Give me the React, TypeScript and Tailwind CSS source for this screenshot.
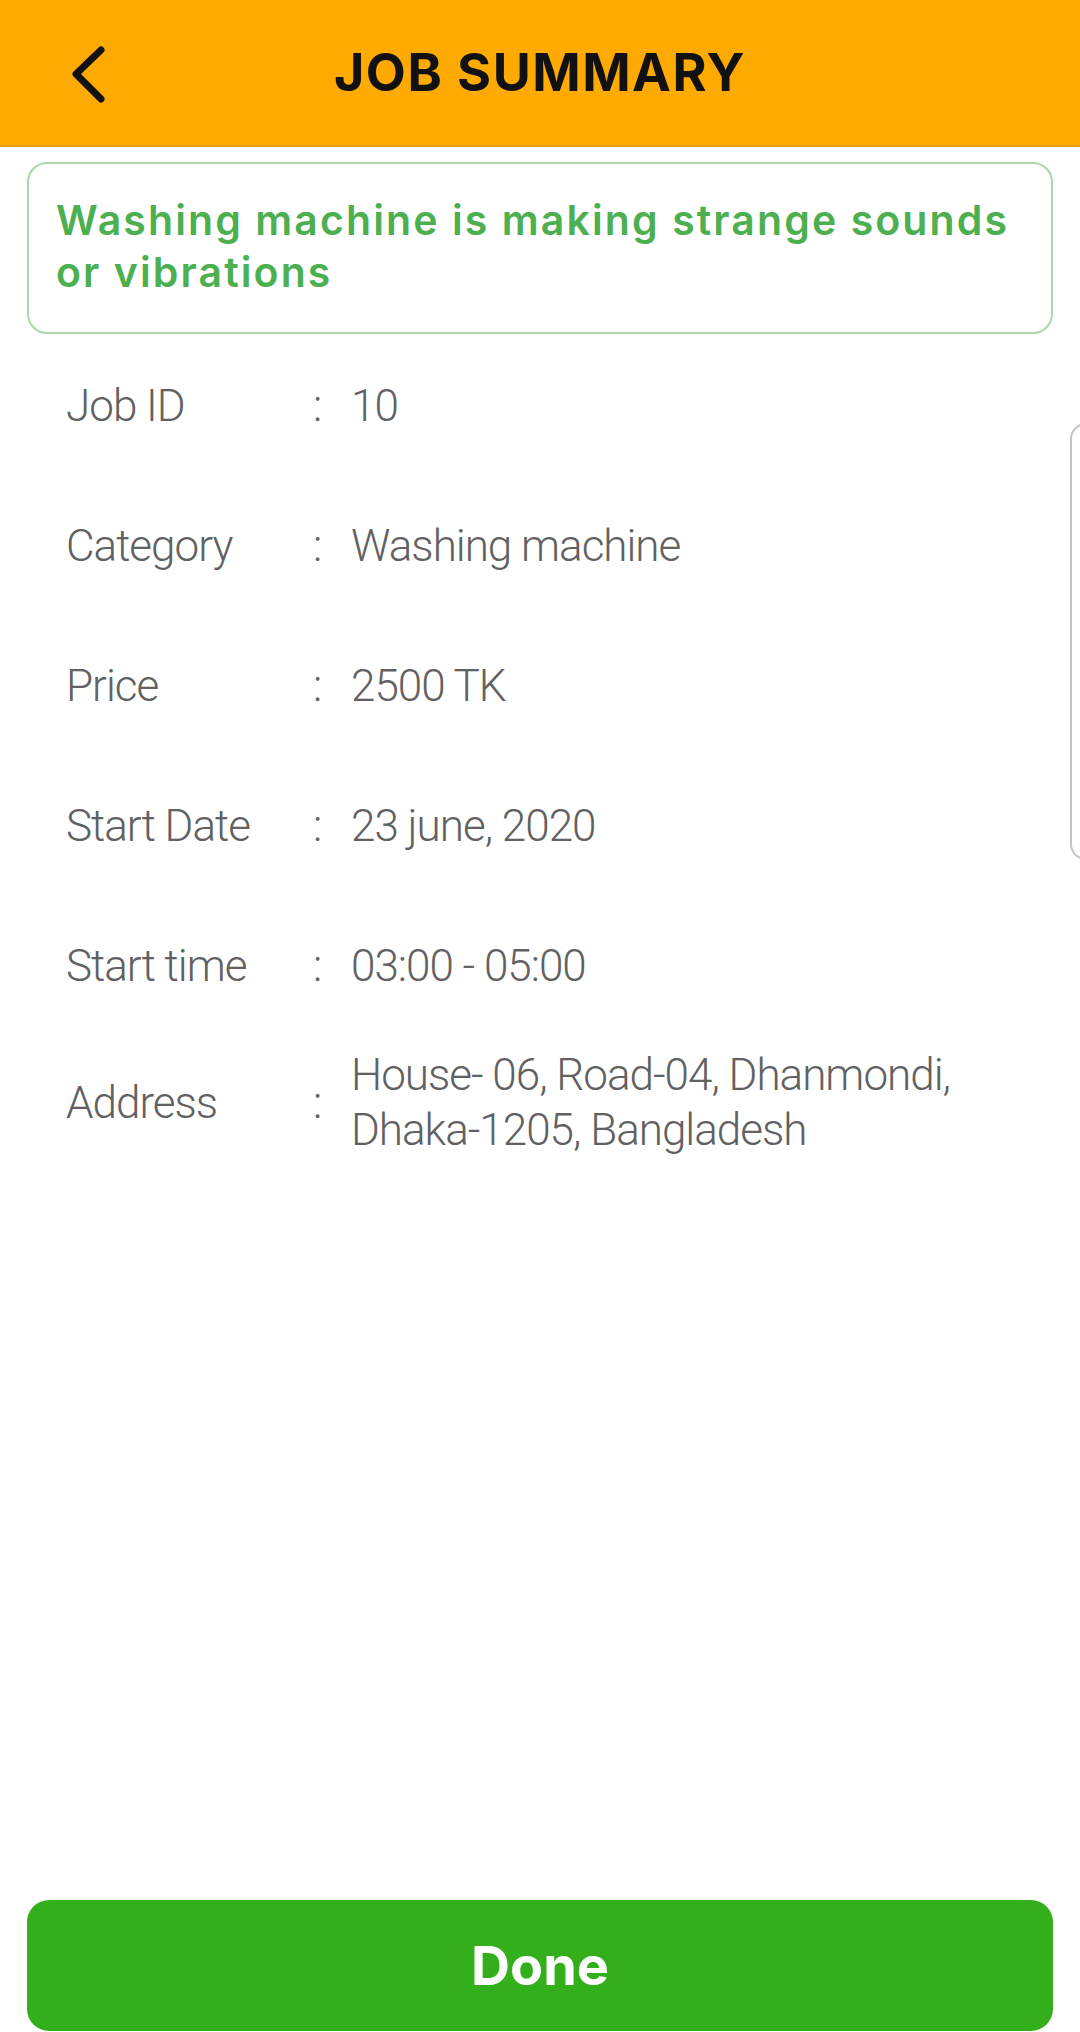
import { ReactNode } from "react";

interface RowProps {
  label: string;
  children: ReactNode;
  tall?: boolean;
}

function SummaryRow(props: RowProps) {
  return (
    <div className={`flex items-center ${props.tall ? "h-[134px]" : "h-[140px]"}`}>
      <span className="w-[247px] shrink-0">{props.label}</span>
      <span className="w-[38px] shrink-0">:</span>
      <span className="leading-[55px]">{props.children}</span>
    </div>
  );
}

export default function App() {
  return (
    <div className="relative flex h-[2032px] w-[1080px] flex-col overflow-hidden bg-white">
      <header className="relative flex h-[147px] shrink-0 items-center justify-center border-b-2 border-[#e8a000] bg-[#ffaa00]">
        <button type="button" className="absolute left-[64px] top-[40px] p-1">
          <svg width="40" height="62" viewBox="0 0 40 62" fill="none">
            <polyline
              points="33,6 8,30 33,55"
              stroke="#111"
              strokeWidth="7"
              strokeLinecap="round"
              strokeLinejoin="round"
            />
          </svg>
        </button>
        <h1 className="font-['Inter',sans-serif] text-[52px] font-bold tracking-[1.5px] text-[#111]">
          JOB SUMMARY
        </h1>
      </header>

      <div className="mx-[27px] mt-[15px] h-[172px] shrink-0 rounded-[20px] border-2 border-[#a9d8ab] px-[27px] pt-[30px]">
        <p className="font-['Inter',sans-serif] text-[41px] font-semibold leading-[52px] tracking-[2.1px] text-[#4caf50]">
          Washing machine is making strange sounds or vibrations
        </p>
      </div>

      <div className="mt-[2px] pl-[66px] font-['Roboto',sans-serif] text-[44px] font-light tracking-[-1px] text-[#616161]">
        <SummaryRow label="Job ID">10</SummaryRow>
        <SummaryRow label="Category">Washing machine</SummaryRow>
        <SummaryRow label="Price">2500 TK</SummaryRow>
        <SummaryRow label="Start Date">23 june, 2020</SummaryRow>
        <SummaryRow label="Start time">03:00 - 05:00</SummaryRow>
        <SummaryRow label="Address" tall>
          House- 06, Road-04, Dhanmondi,
          <br />
          Dhaka-1205, Bangladesh
        </SummaryRow>
      </div>

      <div className="absolute left-[1070px] top-[423px] h-[437px] w-[40px] rounded-[16px] border-2 border-[#c4c4c4] bg-white" />

      <button
        type="button"
        className="mx-[27px] mb-[1px] mt-auto flex h-[131px] shrink-0 items-center justify-center rounded-[22px] bg-[#34af1c] font-['Inter',sans-serif] text-[54px] font-bold text-white"
      >
        Done
      </button>
    </div>
  );
}
